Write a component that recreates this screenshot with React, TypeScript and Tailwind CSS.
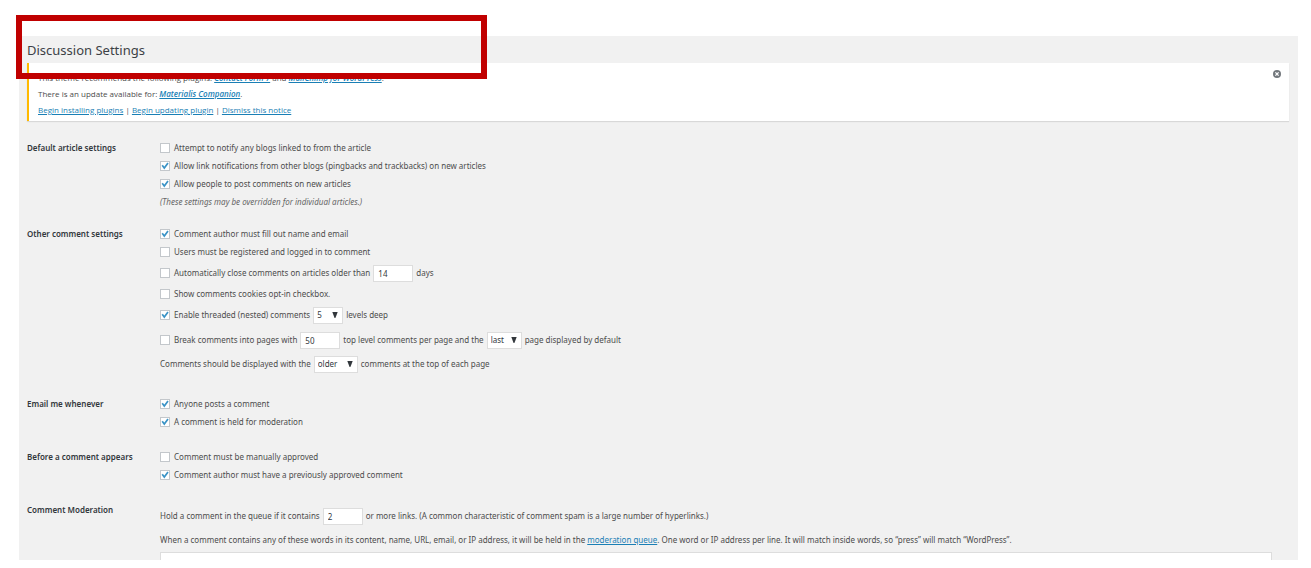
import type { ReactNode } from 'react';

const linkClass = 'text-[#1a7fb5] underline';
const rowClass = 'flex items-center whitespace-pre';

function Tick({ id, checked, children }: { id: string; checked?: boolean; children: ReactNode }) {
  return (
    <>
      <span className="mr-1 grid size-[10px] shrink-0">
        <input
          id={id}
          type="checkbox"
          defaultChecked={checked}
          className="peer col-start-1 row-start-1 size-[10px] appearance-none border border-[#c3c7cb] bg-white"
        />
        <svg
          viewBox="0 0 10 10"
          className="pointer-events-none invisible col-start-1 row-start-1 size-[10px] peer-checked:visible"
          aria-hidden="true"
        >
          <path d="M2.2 4.2 L4.3 7 L8 2" fill="none" stroke="#3a93c6" strokeWidth="1.7" />
        </svg>
      </span>
      <label htmlFor={id}>{children}</label>
    </>
  );
}

function NumberBox({ label, value }: { label: string; value: string }) {
  return (
    <input
      type="text"
      inputMode="numeric"
      aria-label={label}
      defaultValue={value}
      className="mx-[3px] h-[17px] w-10 border border-[#ddd] bg-white px-1 text-[#32373c]"
    />
  );
}

function Picker({ label, value, options, width }: { label: string; value: string; options: string[]; width: string }) {
  return (
    <span className={`relative mx-[3px] ${width}`}>
      <select
        aria-label={label}
        defaultValue={value}
        className="block h-[17px] w-full appearance-none border border-[#ddd] bg-white pl-[3px] text-[#32373c]"
      >
        {options.map((o) => (
          <option key={o}>{o}</option>
        ))}
      </select>
      <svg viewBox="0 0 6 6" className="pointer-events-none absolute top-[5px] right-[5px] size-[6px]" aria-hidden="true">
        <path d="M0.3 0 H5.7 L3.4 6 H2.6 Z" fill="#32373c" />
      </svg>
    </span>
  );
}

function Section({ title, className, children }: { title: string; className: string; children: ReactNode }) {
  return (
    <section className={`flex ${className}`}>
      <h2 className="w-[133px] shrink-0 font-semibold leading-[18px] text-[#32373c]">{title}</h2>
      <div className="min-w-0 flex-1">{children}</div>
    </section>
  );
}

export default function App() {
  return (
    <div className="relative h-screen overflow-hidden bg-white pt-9 pr-[13px] pb-2 pl-[19px] font-['Noto_Sans','Open_Sans',sans-serif] text-[8px] text-[#4c4c4c]">
      <main className="h-full overflow-hidden bg-[#f1f1f1] pr-[9px] pl-2">
        <h1 className="h-[27px] text-[13px] leading-[29px] text-[#3c4146]">Discussion Settings</h1>

        <div className="flex items-start justify-between border-l-2 border-[#ffb900] bg-white py-[7px] pr-2 pl-[9px] shadow-[0_1px_1px_rgba(0,0,0,0.1)]">
          <div className="font-['Open_Sans','Noto_Sans',sans-serif] leading-4 [&_p:last-child]:h-3">
            <p>
              This theme recommends the following plugins:{' '}
              <em className="font-semibold"><a href="#contact-form" className={linkClass}>Contact Form 7</a></em> and{' '}
              <em className="font-semibold"><a href="#mailchimp" className={linkClass}>MailChimp for WordPress</a></em>.
            </p>
            <p>
              There is an update available for:{' '}
              <em className="font-semibold"><a href="#companion" className={linkClass}>Materialis Companion</a></em>.
            </p>
            <p>
              <a href="#install" className={linkClass}>Begin installing plugins</a> |{' '}
              <a href="#update" className={linkClass}>Begin updating plugin</a> |{' '}
              <a href="#dismiss" className={linkClass}>Dismiss this notice</a>
            </p>
          </div>
          <button type="button" aria-label="Dismiss">
            <svg viewBox="0 0 8 8" className="block size-2" aria-hidden="true">
              <circle cx="4" cy="4" r="4" fill="#72777c" />
              <path d="M2.4 2.4 L5.6 5.6 M5.6 2.4 L2.4 5.6" stroke="#fff" strokeWidth="1.3" />
            </svg>
          </button>
        </div>

        <form>
          <Section title="Default article settings" className="mt-[18px]">
            <div className={`${rowClass} h-[18px]`}><Tick id="notify">Attempt to notify any blogs linked to from the article</Tick></div>
            <div className={`${rowClass} h-[18px]`}><Tick id="pingbacks" checked>Allow link notifications from other blogs (pingbacks and trackbacks) on new articles</Tick></div>
            <div className={`${rowClass} h-[18px]`}><Tick id="allow" checked>Allow people to post comments on new articles</Tick></div>
            <p className="leading-[18px] text-[#666] italic">(These settings may be overridden for individual articles.)</p>
          </Section>

          <Section title="Other comment settings" className="mt-[14px]">
            <div className={`${rowClass} h-[18px]`}><Tick id="author" checked>Comment author must fill out name and email</Tick></div>
            <div className={`${rowClass} h-[18px]`}><Tick id="registered">Users must be registered and logged in to comment</Tick></div>
            <div className={`${rowClass} h-6`}>
              <Tick id="close">Automatically close comments on articles older than</Tick>
              <NumberBox label="Days before comments close" value="14" />
              <span>days</span>
            </div>
            <div className={`${rowClass} h-[18px]`}><Tick id="cookies">Show comments cookies opt-in checkbox.</Tick></div>
            <div className={`${rowClass} h-6`}>
              <Tick id="threaded" checked>Enable threaded (nested) comments</Tick>
              <Picker label="Levels deep" value="5" options={['2', '3', '4', '5', '6', '7', '8', '9', '10']} width="w-[30px]" />
              <span>levels deep</span>
            </div>
            <div className={`${rowClass} h-[26px]`}>
              <Tick id="pages">Break comments into pages with</Tick>
              <NumberBox label="Top level comments per page" value="50" />
              <span>top level comments per page and the</span>
              <Picker label="Default page" value="last" options={['last', 'first']} width="w-[35px]" />
              <span>page displayed by default</span>
            </div>
            <div className={`${rowClass} h-[22px]`}>
              <span>Comments should be displayed with the</span>
              <Picker label="Comment order" value="older" options={['older', 'newer']} width="w-11" />
              <span>comments at the top of each page</span>
            </div>
          </Section>

          <Section title="Email me whenever" className="mt-5">
            <div className={`${rowClass} h-[18px]`}><Tick id="anyone" checked>Anyone posts a comment</Tick></div>
            <div className={`${rowClass} h-[18px]`}><Tick id="held" checked>A comment is held for moderation</Tick></div>
          </Section>

          <Section title="Before a comment appears" className="mt-[17px]">
            <div className={`${rowClass} h-[18px]`}><Tick id="manual">Comment must be manually approved</Tick></div>
            <div className={`${rowClass} h-[18px]`}><Tick id="previous" checked>Comment author must have a previously approved comment</Tick></div>
          </Section>

          <Section title="Comment Moderation" className="mt-[17px]">
            <div className={`${rowClass} mt-[3px] h-6`}>
              <span>Hold a comment in the queue if it contains</span>
              <NumberBox label="Number of links" value="2" />
              <span>or more links. (A common characteristic of comment spam is a large number of hyperlinks.)</span>
            </div>
            <label htmlFor="words" className="block h-6 leading-6">
              When a comment contains any of these words in its content, name, URL, email, or IP address, it will be held in the{' '}
              <a href="#queue" className={linkClass}>moderation queue</a>. One word or IP address per line. It will match inside words, so “press” will match “WordPress”.
            </label>
            <div className="pr-[17px]">
              <textarea id="words" rows={10} className="block w-full resize-none border border-[#ddd] bg-white p-1" />
            </div>
          </Section>
        </form>
      </main>
      <div className="pointer-events-none absolute top-[15px] left-4 h-16 w-[471px] border-[6px] border-[#c00000]" />
    </div>
  );
}
